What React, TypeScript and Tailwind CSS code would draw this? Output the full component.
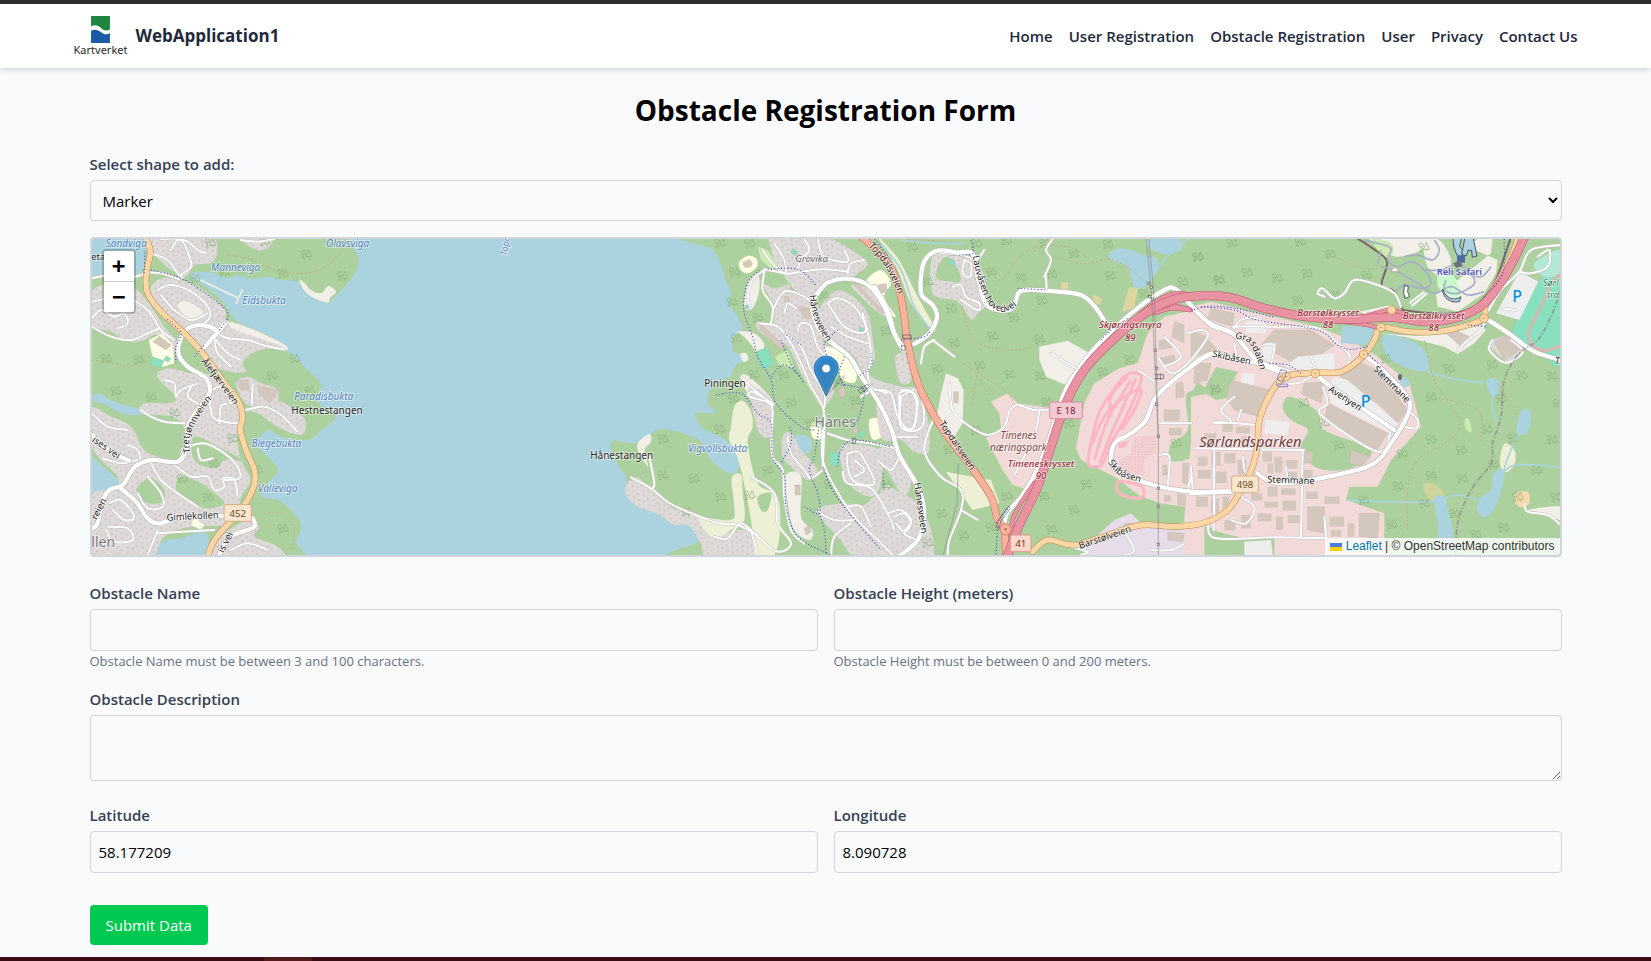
import { useState } from "react";
import type { ReactNode } from "react";

/* ------------------------------------------------------------------ */
/* Map geometry. Four sheets laid side by side, each with an x origin. */
/* ------------------------------------------------------------------ */

const W = 240; // west shore
const H = 1710; // Hånes
const T = 2640; // Timenes
const S = 3570; // Sørlandsparken

const WATER = "#aad3df";
const FOREST = "#add19e";
const TOWN = "#dddad9";
const TRADE = "#f2dad9";
const OPEN = "#f2efe9";
const FARM = "#eef0d5";
const SCHOOL = "#ffffe5";
const HALL = "#d4c8be";
const PITCH = "#88e0be";
const LOT = "#eeeeee";
const WORKS = "#e6dcea";

type Shape = [number, string, string, boolean?];

function parse(points: string): number[][] {
  return points.split(" ").map((p) => p.split(",").map(Number));
}

/* Catmull-Rom curve through the points */
function curve(points: string, closed = false): string {
  const p = parse(points);
  const n = p.length;
  const at = (i: number) => (closed ? p[(i + n) % n] : p[Math.max(0, Math.min(n - 1, i))]);
  let d = `M${p[0][0]} ${p[0][1]}`;
  const last = closed ? n : n - 1;
  for (let i = 0; i < last; i++) {
    const [a, b, c, e] = [at(i - 1), at(i), at(i + 1), at(i + 2)];
    d += `C${b[0] + (c[0] - a[0]) / 6} ${b[1] + (c[1] - a[1]) / 6} ${c[0] - (e[0] - b[0]) / 6} ${c[1] - (e[1] - b[1]) / 6} ${c[0]} ${c[1]}`;
  }
  return closed ? d + "Z" : d;
}

function straight(points: string): string {
  return "M" + points.split(" ").join("L") + "Z";
}

const land: Shape[] = [
  [W, FOREST, "33,142 100,138 180,128 195,60 205,27 205,0 770,0 800,27 832,85 822,130 795,165 762,200 740,218 700,205 665,180 650,155 600,150 560,140 510,146 470,135 440,145 400,130 350,125 325,138 380,175 425,215 470,275 560,315 610,355 680,420 720,465 708,515 765,555 722,600 680,630 600,620 560,600 525,640 560,680 592,720 560,760 542,800 590,810 635,845 662,890 645,935 665,965 640,1000 0,1000 0,142"],
  [H, FOREST, "425,0 428,60 445,90 465,150 480,190 475,220 515,290 485,325 490,365 525,385 490,410 480,440 450,450 415,485 412,520 432,548 375,550 390,590 430,612 475,640 505,690 495,728 465,725 420,690 390,635 330,608 270,598 225,620 190,640 120,635 135,695 165,740 168,790 200,830 255,850 310,885 350,885 385,930 405,1000 2000,1000 3100,1000 3100,0 2000,0"],
];

const areas: Shape[] = [
  // west shore: water inlets
  [W, WATER, "33,497 60,492 100,515 175,538 178,555 120,550 70,522 33,512"],
  [W, WATER, "25,685 60,705 105,745 115,775 70,790 30,805"],
  [W, WATER, "245,935 300,925 365,905 385,940 380,990 200,990"],
  [W, OPEN, "655,150 672,160 690,180 720,190 742,168 765,185 748,202 740,218 700,205 670,182"],
  [W, OPEN, "440,275 520,300 612,345 610,362 545,345 470,310"],
  // west shore: housing
  [W, TOWN, "215,20 385,20 408,70 385,100 345,105 312,140 280,125 240,95 215,60"],
  [W, TOWN, "480,20 570,20 560,55 520,58"],
  [W, TOWN, "30,200 60,165 150,170 200,215 250,290 292,340 285,372 230,315 190,330 140,335 90,305 30,285"],
  [W, TOWN, "208,180 230,150 270,145 350,170 430,235 445,290 600,348 545,358 510,372 485,400 495,425 450,425 390,405 350,365 300,300 230,230"],
  [W, TOWN, "228,440 260,415 330,430 400,440 465,520 480,570 468,625 480,690 508,750 480,800 470,840 420,850 350,840 320,760 290,715 310,600 270,560 180,550 190,520 260,520 285,500"],
  [W, TOWN, "465,460 500,440 540,460 590,480 580,525 500,525"],
  [W, TOWN, "490,535 560,525 600,515 640,540 672,570 668,610 640,612 590,590 530,550"],
  [W, TOWN, "30,535 90,560 150,590 190,660 250,690 330,750 360,840 440,850 440,885 330,890 250,920 200,990 30,990 30,800 100,780 110,740 60,690 30,640"],
  [W, TOWN, "420,920 500,870 535,890 520,920 590,950 600,990 400,990"],
  [W, FOREST, "170,770 210,745 250,780 245,815 200,820 172,795"],
  [W, FOREST, "300,740 360,760 400,790 430,820 380,835 310,810 285,775"],
  [W, FOREST, "230,590 300,610 310,650 240,655 190,640"],
  [W, FOREST, "340,620 430,660 480,690 430,690 400,715 340,690"],
  [W, SCHOOL, "203,330 245,310 275,345 280,400 245,410 215,380", true],
  [W, HALL, "215,335 235,318 270,345 255,360", true],
  [W, PITCH, "215,380 250,392 238,415 207,402", true],
  [W, PITCH, "255,377 270,385 262,397 248,390", true],
  [W, HALL, "465,450 500,450 505,480 480,480", true],
  [W, HALL, "530,468 592,480 565,520 535,490", true],
  [W, SCHOOL, "340,865 370,885 360,900 330,885", true],
  [W, OPEN, "290,225 320,215 365,245 350,270 310,255"],
  // Hånes
  [H, TOWN, "590,0 640,20 760,20 840,60 890,100 860,130 830,150 750,170 720,215 680,190 640,140 610,90"],
  [H, SCHOOL, "505,95 530,78 555,85 558,110 530,130 508,118"],
  [H, HALL, "515,98 535,88 545,100 538,112 520,112", true],
  [H, SCHOOL, "885,155 930,120 960,160 940,200 975,260 940,240 910,200"],
  [H, "#cdebb0", "560,50 590,60 625,110 610,125 570,90", true],
  [H, OPEN, "530,160 560,130 565,180 545,235 520,230"],
  [H, TOWN, "575,160 610,175 655,165 640,200 610,220 590,190"],
  [H, TOWN, "620,205 680,190 735,215 750,300 760,340 800,360 770,400 790,480 755,530 725,490 690,430 650,350 600,330 560,300 560,275 605,280"],
  [H, TOWN, "745,240 790,185 840,195 890,250 905,330 910,390 880,430 850,380 800,340 760,310"],
  [H, TOWN, "840,165 880,170 930,210 945,260 900,230 860,190"],
  [H, TOWN, "880,430 920,450 990,470 1045,480 1060,560 1040,640 990,620 950,560 900,490"],
  [H, TOWN, "975,375 1000,365 1010,430 985,430", true],
  [H, OPEN, "500,305 550,310 580,345 560,380 545,350 520,320"],
  [H, OPEN, "508,372 525,370 532,388 518,396"],
  [H, OPEN, "508,440 535,440 600,505 600,530 570,540 530,490"],
  [H, TOWN, "535,470 600,510 602,615 565,610 545,540"],
  [H, TOWN, "635,620 660,610 700,670 740,720 710,750 660,710 635,680"],
  [H, OPEN, "645,735 690,740 690,860 725,900 715,930 670,900 650,820"],
  [H, TOWN, "810,650 880,645 930,670 930,760 900,800 840,770 815,720"],
  [H, TOWN, "740,840 830,820 870,830 930,790 950,850 960,900 1040,850 1080,900 1070,1000 880,1000 800,920"],
  [H, TOWN, "920,660 980,660 1020,740 1000,800 960,740"],
  [H, TOWN, "168,760 200,742 240,780 300,830 390,860 440,910 530,900 560,950 580,1000 420,1000 385,930 350,885 310,885 255,850 200,830 165,795"],
  [H, OPEN, "200,640 235,612 240,635 220,660 232,710 205,670"],
  [H, FARM, "490,530 515,512 540,545 545,590 530,640 560,760 620,800 625,920 600,990 555,990 540,870 505,700 475,630 480,590"],
  [H, FARM, "482,745 510,735 515,790 520,870 480,900 430,925 385,865 480,870 490,830"],
  [H, FOREST, "560,800 600,790 590,840 570,840"],
  [H, SCHOOL, "765,350 820,370 855,420 850,458 810,445 800,395 765,375"],
  [H, SCHOOL, "720,585 745,575 750,625 725,622"],
  [H, SCHOOL, "895,570 935,570 945,610 905,628"],
  [H, PITCH, "552,365 590,352 610,405 575,420", true],
  [H, "#cdebb0", "612,380 650,360 670,415 625,405", true],
  [H, PITCH, "775,665 805,668 803,708 778,706", true],
  [H, PITCH, "865,290 878,295 876,315 864,310", true],
  [H, PITCH, "868,600 885,605 878,625 864,620", true],
  [H, PITCH, "522,225 537,225 537,236 522,236", true],
  [H, PITCH, "663,55 680,65 675,78 660,68", true],
  [H, HALL, "640,200 655,200 655,215 640,215", true],
  [H, HALL, "680,230 715,235 735,265 700,265", true],
  [H, HALL, "800,480 820,470 825,495 810,505", true],
  [H, HALL, "845,595 862,595 862,610 845,606", true],
  [H, HALL, "845,160 855,160 940,245 930,250", true],
  [H, HALL, "920,165 945,160 950,185 930,190", true],
  [H, HALL, "672,765 688,765 688,795 672,795", true],
  [H, HALL, "700,895 715,885 722,905 705,915", true],
  [H, HALL, "570,285 640,345 630,360 565,300", true],
  [H, WATER, "672,620 700,615 722,635 715,668 695,665"],
  // Timenes
  [T, FARM, "-10,20 30,60 60,100 110,200 160,290 150,300 90,220 50,120"],
  [T, TOWN, "155,75 200,75 290,100 320,210 290,250 270,268 230,215 155,190"],
  [T, FOREST, "185,85 215,90 240,150 210,155 165,140"],
  [T, PITCH, "205,88 222,92 218,108 203,104", true],
  [T, TOWN, "-10,470 60,490 130,530 145,660 100,665 60,630 0,620"],
  [T, TOWN, "0,780 60,790 115,830 130,920 60,990 0,990"],
  [T, TOWN, "45,375 75,375 90,450 60,460 45,410"],
  [T, OPEN, "195,430 230,445 248,480 245,580 220,620 165,570 180,490", true],
  [T, OPEN, "475,350 560,332 635,375 555,465 495,440 475,390", true],
  [T, TRADE, "315,625 360,595 355,550 330,515 380,490 410,520 510,535 520,600 490,700 445,780 395,765 365,720", true],
  [T, FARM, "195,725 245,735 330,750 355,820 275,840 240,790", true],
  [T, TRADE, "640,460 715,415 770,400 800,310 850,260 960,235 1050,235 1100,300 1100,420 950,450 930,500 920,600 870,690 1060,680 1100,860 840,820 780,800 700,740 600,690 585,655 610,520", true],
  [T, FOREST, "950,475 1040,420 1060,420 1060,510 980,510 935,560 940,660 910,690 868,690 870,640 920,600 915,500"],
  [T, WORKS, "700,870 750,850 780,880 880,900 960,890 970,990 640,990 600,960", true],
  [T, TRADE, "980,880 1060,850 1100,1000 1010,1000 990,930", true],
  [T, WATER, "682,75 720,55 790,75 830,90 825,130 790,170 760,172 740,110 700,95"],
  [T, WATER, "800,30 890,25 900,60 850,72 805,55"],
  [T, "#dcd6a0", "745,170 770,175 760,235 722,245", true],
  [T, "#dcd6a0", "540,155 562,158 560,185 540,182", true],
  [T, "#dcd6a0", "635,195 665,205 655,225 640,220", true],
  [T, HALL, "880,275 930,290 910,340 872,320", true],
  [T, HALL, "920,320 990,335 970,375 912,365", true],
  [T, HALL, "950,240 1020,240 1015,260 960,262", true],
  [T, HALL, "835,330 870,330 880,350 835,360", true],
  [T, HALL, "835,385 880,375 885,400 840,400", true],
  [T, HALL, "885,460 905,455 910,500 885,505", true],
  [T, HALL, "850,540 895,540 895,570 850,572", true],
  [T, HALL, "865,595 902,595 902,615 865,615", true],
  [T, HALL, "218,485 232,485 232,518 218,518", true],
  [T, HALL, "905,700 925,700 925,760 905,760", true],
  [T, HALL, "945,690 985,690 985,740 945,740", true],
  [T, HALL, "890,790 925,800 920,830 890,825", true],
  [T, HALL, "730,880 760,880 760,900 730,900", true],
  [T, HALL, "860,905 910,910 905,935 860,930", true],
  [T, HALL, "1010,890 1060,880 1060,930 1010,930", true],
  [T, HALL, "845,705 858,705 858,735 845,735", true],
  [T, HALL, "850,795 870,798 868,815 850,812", true],
  // Sørlandsparken
  [S, TRADE, "-20,235 60,215 200,250 380,290 480,330 560,380 655,460 690,590 600,690 560,770 475,770 465,810 580,850 580,990 -20,990 -20,860 0,640 0,500 60,490 -20,420", true],
  [S, FOREST, "35,485 75,410 140,425 105,505 75,510", true],
  [S, FOREST, "275,530 300,500 380,545 400,600 540,660 480,715 380,715 330,655 350,600 300,570"],
  [S, FOREST, "40,890 250,925 250,1000 40,1000", true],
  [S, TRADE, "60,900 150,880 330,880 560,900 580,1000 260,1000 250,925 160,925", true],
  [S, OPEN, "505,245 600,225 640,262 560,272", true],
  [S, OPEN, "560,310 680,318 860,280 885,300 850,340 800,372 760,350 640,320", true],
  [S, OPEN, "900,70 905,27 860,27 830,50 920,90 915,130 880,190 800,245 740,230 735,190 800,150", true],
  [S, OPEN, "540,20 700,20 690,60 620,80 580,60"],
  [S, "#c8facc", "745,130 790,140 805,200 760,190 740,165"],
  [S, "#cdebb0", "545,27 600,40 605,70 575,80"],
  [S, OPEN, "700,35 745,30 780,90 760,140 710,110"],
  [S, PITCH, "1060,130 1110,110 1110,400 1040,360 985,350 960,310"],
  [S, "#b3e8d6", "1030,100 1110,60 1110,130 1060,140"],
  [S, LOT, "985,125 1042,155 985,270 915,250", true],
  [S, TOWN, "905,330 960,310 995,360 950,400 895,350", true],
  [S, HALL, "910,335 955,312 988,355 940,392", true],
  [S, HALL, "250,300 360,300 430,345 395,370 300,395 210,345", true],
  [S, HALL, "60,235 130,250 125,290 50,265", true],
  [S, HALL, "0,300 45,320 75,355 0,385", true],
  [S, HALL, "10,400 60,400 50,450 10,460", true],
  [S, LOT, "165,275 220,270 225,310 165,310", true],
  [S, LOT, "215,345 255,340 240,400 215,385", true],
  [S, LOT, "155,430 195,430 180,480 145,470", true],
  [S, LOT, "320,380 430,370 430,420 350,420 280,410", true],
  [S, HALL, "120,450 200,470 240,480 205,560 130,540 105,500", true],
  [S, HALL, "340,460 400,455 390,520 330,490", true],
  [S, HALL, "440,430 500,395 560,420 650,540 620,580 560,520 470,470", true],
  [S, LOT, "430,440 470,450 620,580 600,610 420,520 410,470", true],
  [S, HALL, "410,520 590,610 555,665 400,570", true],
  [S, HALL, "480,660 540,680 510,710 475,700", true],
  [S, LOT, "225,570 295,575 290,615 220,610", true],
  [S, LOT, "160,935 240,930 245,975 160,975", true],
  [S, HALL, "505,850 565,850 560,925 505,920", true],
  [S, HALL, "350,830 400,830 400,910 350,900", true],
  [S, HALL, "765,310 795,300 835,320 810,350", true],
  [S, WATER, "452,288 555,290 530,345 450,340", true],
  [S, WATER, "575,320 620,318 690,350 715,400 700,425 640,410 590,380"],
  [S, WATER, "625,450 645,445 658,462 640,472"],
  [S, WATER, "885,455 905,445 925,455 920,495 900,495"],
  [S, WATER, "990,545 1015,540 1020,570 1005,612 980,610 978,590"],
  [S, FARM, "928,680 942,640 970,660 972,700 950,725 930,715"],
  [S, WATER, "905,735 930,715 940,740 925,800 900,850 875,860 858,835 870,800 900,780"],
  [S, "#cfd49a", "695,765 735,765 760,800 720,810"],
  [S, WATER, "730,805 760,800 770,840 785,900 790,960 745,960 740,880"],
  [S, "#fbd9a8", "975,790 1010,785 1015,820 990,832 972,815"],
  [S, "#cdebb0", "822,568 835,570 842,605 825,598"],
  [S, OPEN, "1010,840 1110,830 1110,870 1060,850"],
];

/* rows of sheds in the trade park: x, y, width, height */
const sheds: [number, number, number, number][] = [
  [20, 680, 30, 28], [62, 665, 26, 42], [100, 670, 34, 30], [140, 690, 26, 44], [215, 665, 28, 30],
  [250, 680, 24, 48], [20, 720, 40, 26], [75, 725, 32, 34], [230, 700, 16, 30], [285, 690, 34, 26],
  [290, 725, 28, 20], [15, 800, 36, 30], [60, 805, 24, 44], [95, 800, 20, 34], [180, 790, 34, 22],
  [230, 770, 30, 30], [270, 775, 44, 20], [220, 815, 40, 18], [275, 812, 40, 30], [100, 870, 34, 32],
  [150, 855, 30, 40], [200, 850, 42, 24], [255, 860, 22, 40], [290, 855, 36, 24], [95, 580, 30, 26],
  [135, 590, 42, 20], [40, 610, 36, 20], [345, 785, 36, 22], [400, 800, 46, 22], [150, 620, 20, 26],
  [415, 860, 44, 30], [420, 900, 30, 20], [470, 880, 20, 40], [330, 665, 34, 36], [335, 720, 30, 24],
];

type RoadKind = "lane" | "street" | "orange" | "red" | "ramp" | "motor";

const roads: [number, RoadKind, string][] = [
  // west shore
  [W, "lane", "33,145 90,135 160,140 200,128 240,130 295,148"],
  [W, "lane", "215,72 260,90 290,130 305,145"],
  [W, "lane", "240,27 300,30 325,80 330,110 300,135"],
  [W, "lane", "270,60 290,30 320,35 350,60 375,70"],
  [W, "lane", "480,30 530,35 580,27"],
  [W, "lane", "33,215 90,205 140,205 200,240 240,300 280,330"],
  [W, "lane", "33,265 60,240 100,260 130,250 140,280 110,295"],
  [W, "lane", "33,290 90,320 150,330 200,310 235,295"],
  [W, "lane", "230,180 270,165 330,185 380,230 385,265 350,290"],
  [W, "lane", "240,195 280,240 330,270 380,250"],
  [W, "lane", "410,310 440,325 500,330 545,345 605,358"],
  [W, "lane", "400,325 440,370 480,390"],
  [W, "lane", "400,330 410,370 450,410"],
  [W, "lane", "180,540 210,560 250,575 310,580"],
  [W, "lane", "380,490 420,470 450,520"],
  [W, "lane", "385,500 395,560 430,575 470,580"],
  [W, "lane", "415,580 420,530 440,520"],
  [W, "lane", "320,650 370,640 430,670 470,710 475,745 430,750"],
  [W, "lane", "350,655 360,690 395,685"],
  [W, "lane", "280,705 330,740 380,740 400,780 430,770 425,745 460,750 470,800"],
  [W, "lane", "210,700 240,750 290,790 350,830"],
  [W, "lane", "250,450 280,460 285,500 300,480 350,460"],
  [W, "lane", "330,470 320,500 350,520"],
  [W, "lane", "33,550 80,590 140,600"],
  [W, "lane", "65,685 120,700 170,690"],
  [W, "lane", "140,645 170,660 180,695"],
  [W, "lane", "85,820 120,810 160,860 130,870 95,840"],
  [W, "lane", "80,890 140,895 155,930 100,935 75,900"],
  [W, "lane", "200,740 240,790 245,830 200,835 170,790"],
  [W, "lane", "230,900 200,975"],
  [W, "lane", "230,910 300,905 400,900"],
  [W, "lane", "450,960 500,940 560,960"],
  [W, "lane", "495,540 550,530 600,555 650,605"],
  [W, "lane", "515,460 512,525"],
  [W, "street", "412,305 380,288 330,290 302,320 292,370 320,410 375,445 385,490 345,545 320,590 318,650 290,695 210,690 160,712 125,765 85,780 62,820 50,880 33,895"],
  [W, "street", "365,358 435,278"],
  [W, "street", "33,615 90,665 145,692"],
  [W, "street", "120,775 165,815 200,865 235,880 300,862 430,858"],
  [W, "street", "515,865 520,890 470,910 440,925 415,975"],
  [W, "orange", "190,15 208,65 196,130 200,190 240,245 310,310 365,370 420,445 470,510 485,560 478,600 495,660 520,720 518,770 480,840 420,905 390,950 380,990"],
  // Hånes
  [H, "lane", "575,60 600,95 640,130 690,125 760,118 830,125"],
  [H, "lane", "610,40 640,90 645,130"],
  [H, "lane", "700,27 715,60 690,90 680,120"],
  [H, "lane", "740,27 760,80 830,95 820,60"],
  [H, "lane", "830,130 840,100 880,90"],
  [H, "lane", "580,120 545,150 530,200 540,235"],
  [H, "lane", "580,118 640,130"],
  [H, "lane", "580,125 575,180 605,230 600,280"],
  [H, "lane", "605,240 640,185 690,195 720,215"],
  [H, "lane", "565,280 620,290 660,340 690,400 720,470 755,530 760,590 755,710"],
  [H, "lane", "640,310 690,350 720,420 760,490 760,530"],
  [H, "lane", "680,300 690,280 720,290 740,350 780,400"],
  [H, "lane", "640,250 650,220 675,235"],
  [H, "lane", "770,220 800,205 850,230 885,290 870,310 820,290 790,250 770,220"],
  [H, "lane", "780,290 830,320 890,340"],
  [H, "lane", "875,250 895,330 900,400 880,430"],
  [H, "lane", "510,440 540,470 600,520 605,520 590,510 545,485 535,500 600,525 602,600 605,680 635,720 640,800 660,900 700,940"],
  [H, "lane", "650,620 660,670 700,720 720,745 755,720"],
  [H, "lane", "985,490 1010,480 1035,510 1030,590 990,590 985,530 985,490"],
  [H, "lane", "890,430 900,470 950,490"],
  [H, "lane", "970,620 1040,620"],
  [H, "lane", "830,670 860,665 880,690 910,760 850,755 830,710 830,670"],
  [H, "lane", "850,690 880,720 850,740"],
  [H, "lane", "815,725 830,760 900,775 950,850 970,900"],
  [H, "lane", "830,830 870,830 900,890"],
  [H, "lane", "970,860 1000,850 1020,880 1000,905 975,880"],
  [H, "lane", "740,845 790,870 850,870"],
  [H, "lane", "780,975 790,920 840,880"],
  [H, "lane", "540,740 610,790 620,880 660,940 620,965 560,920 510,880 470,925 430,920"],
  [H, "lane", "540,900 560,975"],
  [H, "lane", "920,690 960,720 985,680"],
  [H, "lane", "180,742 240,775 300,822 400,865 445,880 500,885 560,915"],
  [H, "lane", "235,680 250,760 243,775"],
  [H, "lane", "755,600 755,690 790,770 850,860 930,940 965,975"],
  [H, "lane", "770,610 830,630 900,640 975,655"],
  [H, "street", "740,190 770,158 830,146 895,168 940,230 970,310 1003,362"],
  [H, "street", "740,190 722,225 740,290 775,332 835,380 875,445 925,520 962,600 985,675 1040,770 1060,850 1040,930 975,985"],
  // Timenes
  [T, "lane", "490,140 510,90 495,60 515,27"],
  [T, "lane", "495,140 497,180"],
  [T, "lane", "155,330 220,380"],
  [T, "lane", "120,400 130,350 160,330"],
  [T, "lane", "310,60 285,90 245,75 180,70"],
  [T, "lane", "250,90 270,100 268,140 245,130 250,90"],
  [T, "lane", "215,170 240,165 255,200 295,220 290,240 240,210"],
  [T, "lane", "160,560 130,660 180,740 240,780 240,840 205,930 200,975"],
  [T, "lane", "205,460 215,540 260,585 320,615 370,590 385,545 410,525 460,540 520,540"],
  [T, "lane", "510,370 600,425"],
  [T, "lane", "475,545 465,600"],
  [T, "lane", "400,735 440,660"],
  [T, "lane", "240,840 290,870"],
  [T, "lane", "770,420 820,455 830,490"],
  [T, "lane", "830,380 870,430 920,400 980,320 960,300 920,310"],
  [T, "lane", "850,410 900,380 850,320"],
  [T, "lane", "830,580 930,580"],
  [T, "lane", "835,675 865,680 860,770"],
  [T, "lane", "930,710 935,780"],
  [T, "lane", "1000,580 1050,575 1020,540 1060,500"],
  [T, "lane", "1000,790 1000,850"],
  [T, "lane", "720,890 760,960 730,975"],
  [T, "lane", "570,950 620,965 600,975"],
  [T, "lane", "810,960 870,960 910,940"],
  [T, "lane", "-60,500 -20,480 30,490 50,560 90,600 110,530 100,490 60,480"],
  [T, "lane", "60,500 110,480 130,560 110,600 60,590 60,500"],
  [T, "lane", "20,850 60,840 90,870 70,910 110,930"],
  [T, "street", "-20,170 20,240 40,310 65,358"],
  [T, "street", "100,342 145,310 168,260 155,225 122,195 120,140 132,90 170,62 230,68 275,72 292,150 320,228 390,238 412,190 440,180 530,185 600,195 640,228 672,275"],
  [T, "street", "370,895 378,850 425,795 470,715 500,640 545,500 580,435 650,345 750,250 850,180 885,178 920,215 980,275 1050,308"],
  [T, "street", "1010,365 950,395 830,495 795,570 750,610 705,635 690,675 700,715 770,750 860,775 960,787 1060,785"],
  // Sørlandsparken
  [S, "lane", "125,290 240,290 380,295 440,340 475,375 470,405"],
  [S, "lane", "120,310 150,270 200,265 225,290"],
  [S, "lane", "215,345 250,345 240,400"],
  [S, "lane", "270,460 320,460 360,440"],
  [S, "lane", "360,380 375,420"],
  [S, "lane", "395,470 410,520 390,555 560,665 600,600"],
  [S, "lane", "640,590 675,595 680,570 655,545"],
  [S, "lane", "70,575 200,585"],
  [S, "lane", "70,660 68,900"],
  [S, "lane", "10,655 340,660"],
  [S, "lane", "0,740 0,790 110,790"],
  [S, "lane", "285,710 290,760"],
  [S, "lane", "335,660 330,925"],
  [S, "lane", "155,680 165,730 190,680"],
  [S, "lane", "400,860 405,920"],
  [S, "lane", "50,880 75,925 250,922 410,925"],
  [S, "lane", "130,790 190,830 165,880 120,870"],
  [S, "lane", "140,400 130,340"],
  [S, "lane", "150,540 140,570"],
  [S, "lane", "400,200 380,190 395,175 430,205 460,190 490,150 560,165 610,190 630,230"],
  [S, "lane", "905,330 895,360 945,398 995,365 960,330"],
  [S, "lane", "985,125 1020,130 1070,110 1075,60 1040,80"],
  [S, "lane", "890,245 930,180 985,125 1020,60 1110,45"],
  [S, "lane", "885,265 870,300 830,330 800,360"],
  [S, "lane", "930,235 975,240"],
  [S, "lane", "1000,820 1010,845 1070,855 1110,885"],
  [S, "street", "-4,222 60,285 125,310 200,395 265,425"],
  [S, "street", "-4,412 60,372 140,388 230,405 290,425"],
  [S, "street", "370,430 420,470 500,525 610,600"],
  [S, "street", "520,375 575,420 640,490 655,540 600,640 540,705 400,742 270,760 215,742 200,730"],
  [S, "street", "0,790 60,785 120,785 150,795"],
  [S, "street", "895,272 960,315 1030,365 1110,390"],
  [S, "orange", "-475,965 -430,930 -350,945 -250,915 -150,885 -50,890 40,878 110,840 150,780 185,710 200,640 205,570 245,480 290,438 370,428 450,425 515,380 550,330 570,292 650,305 740,305 820,288 878,265 885,215 930,140 965,70 985,15"],
  // trunk roads
  [H, "red", "860,10 910,55 960,115 985,180 1000,260 1010,340 1045,470 1110,590 1200,710 1260,800 1280,870 1300,900 1305,990"],
  [T, "ramp", "770,258 830,210 885,190 930,195"],
  [T, "ramp", "820,250 870,235 930,240 870,225"],
  [S, "ramp", "380,262 500,262 600,240 660,262"],
  [S, "ramp", "420,272 500,280 560,292"],
  [T, "ramp", "392,930 395,870 425,810 460,760"],
  [T, "motor", "375,990 415,885 470,770 510,650 555,520 610,420 700,325 800,245 880,208 960,197 1050,203 1140,232 1260,258 1400,268 1530,262 1630,275 1730,262 1810,220 1870,140 1910,65 1935,10"],
];

const roadStyle = {
  lane: { w: 6, fill: "#ffffff", edge: "#c3bfbd" },
  street: { w: 13, fill: "#ffffff", edge: "#b5b1af" },
  orange: { w: 16, fill: "#fcd6a4", edge: "#b88a52" },
  red: { w: 19, fill: "#f9b29c", edge: "#c76a55" },
  ramp: { w: 10, fill: "#e892a2", edge: "#c2506f" },
  motor: { w: 24, fill: "#e892a2", edge: "#c2506f" },
};
const roadOrder: RoadKind[] = ["lane", "street", "orange", "red", "ramp", "motor"];

const cyclePaths: [number, string][] = [
  [W, "190,130 192,60"],
  [W, "210,120 300,145 380,195 435,240 438,270 410,305"],
  [W, "285,400 285,350 300,310 255,265"],
  [W, "340,380 370,345"],
  [H, "565,120 530,160 518,240 545,320 560,380 600,450 615,520 690,590 730,600"],
  [H, "590,118 680,118 735,165"],
  [H, "600,440 640,405 690,440"],
  [H, "435,495 510,490 560,550 600,580 605,680 640,740 645,830 680,920 780,975"],
  [H, "630,330 660,400 700,460"],
  [H, "690,345 640,310"],
  [H, "800,300 760,340 770,380"],
  [H, "800,460 850,470 880,480 865,560 840,590"],
  [H, "658,590 660,640 630,700"],
  [H, "755,710 790,790 860,880 930,960"],
  [H, "745,580 730,680 715,720 740,790 745,850 700,830"],
  [H, "800,710 810,660 850,630 960,650"],
  [H, "740,840 760,900 765,975"],
  [H, "820,380 805,430 820,470"],
  [H, "900,370 900,410 860,440"],
  [H, "935,730 940,780"],
  [H, "910,27 960,90"],
  [T, "350,890 345,975"],
  [T, "60,330 130,320 150,300"],
  [T, "270,30 275,70 235,75"],
  [T, "410,175 500,180"],
  [T, "660,330 690,300 740,265"],
  [T, "385,830 345,880"],
  [T, "930,240 1000,228 1090,240 1180,262"],
  [S, "30,230 130,240 200,270 380,300 440,345 480,358 530,350"],
  [S, "235,400 290,405 330,430"],
  [S, "560,400 530,370"],
  [S, "940,27 935,130 890,190"],
  [S, "830,285 890,290"],
];

const trails: [number, string][] = [
  [W, "440,75 520,90 600,125 700,125 770,80 790,27"],
  [W, "33,390 100,400 150,410 200,370"],
  [W, "550,850 600,850 640,900 630,960"],
  [T, "80,27 200,35"],
  [T, "320,100 360,150 440,60 560,50 640,100"],
  [T, "240,215 280,330 380,360 460,350"],
  [T, "220,380 290,430 370,480 400,520"],
  [T, "290,440 330,500"],
  [T, "460,60 600,100 700,90 800,160"],
  [T, "300,400 280,470 275,530"],
  [H, "820,520 870,540 850,480"],
  [S, "430,80 500,110 560,120"],
  [S, "700,330 730,450 800,560 790,620 680,690 650,780 650,900"],
  [S, "730,500 860,540 870,640"],
  [S, "890,420 960,520 980,560"],
];

const streams: [number, string][] = [
  [W, "33,497 80,520 160,545"],
  [T, "0,40 60,120 100,230 150,300"],
  [T, "60,30 160,40 250,40"],
  [T, "930,20 860,80 800,160"],
  [S, "710,425 780,445 880,460"],
  [S, "905,495 905,540 918,575"],
  [S, "985,610 960,660 940,720 970,705 1040,705 1110,712"],
  [S, "465,810 600,815 720,815 800,795 860,810"],
];

const trees: [number, string][] = [
  [W, "387,38 427,125 342,145 550,33 675,72 605,130 783,137 75,385 173,388 103,482 210,500 280,548 455,625 398,700 303,745 380,802 573,435 685,482 640,385 528,718 605,895"],
  [H, "447,38 490,125 482,215 560,262 548,433 637,435 660,517 487,505 445,597 275,627 275,735 368,745 447,800 535,795 590,720 853,512 717,578 775,762 945,765 495,325 757,195 943,302 535,40 345,845"],
  [T, "93,50 285,40 375,30 490,38 578,70 680,42 687,137 905,155 1015,148 950,80 140,155 330,125 420,142 512,132 482,210 210,235 398,262 578,295 335,318 475,327 220,338 167,415 297,405 387,433 477,437 745,387 665,425 497,515 563,580 283,600 203,658 377,797 488,798 578,838 615,762 182,850 247,915 330,892 510,897 138,938 788,190 1003,477 885,638"],
  [S, "20,80 123,38 168,127 83,150 258,143 347,130 417,72 327,35 525,135 320,210 432,195 72,477 337,517 398,578 443,645 633,670 583,385 773,415 903,403 992,435 1083,437 720,500 930,505 888,597 965,625 1083,628 720,628 810,660 720,735 813,745 908,702 1035,720 620,767 517,810 790,850 602,882 853,912 937,892 700,820 698,50 1095,800 1100,520 980,800"],
];

/* ------------------------------ labels ----------------------------- */

type LabelKind = "sea" | "place" | "exit" | "park" | "bay" | "road";

const labels: [number, number, number, string, LabelKind, number?][] = [
  [W, 136, 50, "Sandviga", "sea"],
  [W, 800, 50, "Olavsviga", "sea"],
  [W, 464, 122, "Manneviga", "sea"],
  [W, 549, 221, "Eidsbukta", "sea"],
  [W, 728, 509, "Paradisbukta", "sea"],
  [W, 586, 651, "Blegebukta", "sea"],
  [W, 590, 786, "Valleviga", "sea"],
  [H, 440, 667, "Vigvollsbukta", "sea"],
  [W, 738, 552, "Hestnestangen", "place"],
  [H, 462, 470, "Piningen", "place"],
  [H, 152, 688, "Hånestangen", "place"],
  [H, 722, 96, "Grovika", "bay"],
  [T, 413, 627, "Timenes", "park"],
  [T, 412, 663, "næringspark", "park"],
  [T, 480, 710, "Timeneskrysset", "exit"],
  [T, 480, 746, "90", "exit"],
  [T, 748, 295, "Skjøringsmyra", "exit"],
  [T, 748, 332, "89", "exit"],
  [S, 411, 257, "Barstølkrysset", "exit"],
  [S, 411, 293, "88", "exit"],
  [S, 728, 268, "Barstølkrysset", "exit"],
  [S, 728, 304, "88", "exit"],
  [T, 672, 931, "Barstølveien", "road", -19],
  [T, 228, 655, "Topdalsveien", "road", 56],
  [T, 118, 842, "Hånesveien", "road", 82],
  [S, 122, 392, "Skibåsen", "road", 12],
  [S, 300, 760, "Stemmane", "road", 2],
  [S, 462, 514, "Avenyen", "road", 33],
  [S, 602, 472, "Stemmane", "road", 45],
  [W, 75, 662, "ises vei", "road", 35],
  [W, 55, 845, "reien", "road", -62],
  [W, 435, 945, "is vei", "road", -62],
  [W, 335, 868, "Gimlekollen", "road", -3],
];

const curvedLabels: [string, number, string, string][] = [
  ["alef", W, "360,395 415,465 462,530", "Ålefjærveien"],
  ["tretj", W, "328,668 328,610 375,528 400,500", "Tretjønnveien"],
  ["hanes", H, "716,195 722,240 745,300 790,365", "Hånesveien"],
  ["topd", H, "892,48 940,105 975,175 995,240", "Topdalsveien"],
  ["lauv", T, "275,78 290,145 320,218 360,245 400,232 440,200", "Lauvåsen hovedvei"],
  ["skib", T, "680,698 715,735 775,756 820,765", "Skibåsen"],
  ["gras", S, "132,325 175,340 200,395 212,440", "Grasdalen"],
];

const labelClass = {
  sea: "fill-[#4f7fbd] text-[30px] italic",
  place: "fill-[#222222] text-[30px]",
  exit: "fill-[#9b2c3a] text-[29px] italic font-medium",
  park: "fill-[#7d4a4a] text-[30px] italic",
  bay: "fill-[#666666] text-[29px] italic",
  road: "fill-[#222222] text-[28px]",
};

function Halo({ children }: { children: ReactNode }) {
  return (
    <g stroke="#ffffff" strokeWidth={5} strokeOpacity={0.65} strokeLinejoin="round" paintOrder="stroke">
      {children}
    </g>
  );
}

function Shield({ x, y, w, text, fill, edge, ink }: { x: number; y: number; w: number; text: string; fill: string; edge: string; ink: string }) {
  return (
    <g>
      <rect x={x - w / 2} y={y - 25} width={w} height={50} rx={5} fill={fill} stroke={edge} strokeWidth={3} />
      <text x={x} y={y + 11} textAnchor="middle" fill={ink} className="text-[29px]">
        {text}
      </text>
    </g>
  );
}

function MapDrawing() {
  return (
    <svg
      viewBox="273 27 4404 948"
      preserveAspectRatio="xMidYMid slice"
      className="block h-full w-full font-['Noto_Sans',sans-serif]"
      role="img"
      aria-label="Map of Hånes and Sørlandsparken"
    >
      <defs>
        <pattern id="houses" width="34" height="31" patternUnits="userSpaceOnUse" patternTransform="rotate(24)">
          <rect x="3" y="4" width="6" height="5" fill="#cec5bf" />
          <rect x="19" y="1" width="5" height="6" fill="#cec5bf" />
          <rect x="10" y="17" width="6" height="5" fill="#cec5bf" />
          <rect x="26" y="20" width="5" height="6" fill="#cec5bf" />
        </pattern>
        <pattern id="dots" width="10" height="10" patternUnits="userSpaceOnUse">
          <circle cx="3" cy="3" r="1.8" fill="#f590a8" />
          <circle cx="8" cy="8" r="1.5" fill="#f590a8" />
        </pattern>
        <linearGradient id="pin" x1="0" y1="0" x2="0" y2="1">
          <stop offset="0" stopColor="#2e85cb" />
          <stop offset="1" stopColor="#3883b7" />
        </linearGradient>
        <linearGradient id="pinEdge" x1="0" y1="0" x2="0" y2="1">
          <stop offset="0" stopColor="#126fc6" />
          <stop offset="1" stopColor="#2e6c97" />
        </linearGradient>
        <g id="wood" fill="none" stroke="#8db47f" strokeWidth="2.2" strokeLinejoin="round">
          <circle cx="-8" cy="-5" r="6.5" />
          <path d="M-8 -2V13M-13 13H-3" />
          <path d="M8 -13L-1 8H17ZM8 8V14" />
        </g>
        {curvedLabels.map(([id, dx, pts]) => (
          <path key={id} id={id} transform={`translate(${dx} 0)`} d={curve(pts)} />
        ))}
      </defs>

      <rect x="0" y="0" width="5000" height="1000" fill={WATER} />
      {land.map(([dx, fill, pts], i) => (
        <path key={i} transform={`translate(${dx} 0)`} d={curve(pts, true)} fill={fill} />
      ))}
      {areas.map(([dx, fill, pts, flat], i) => {
        const d = flat ? straight(pts) : curve(pts, true);
        return (
          <g key={i} transform={`translate(${dx} 0)`}>
            <path d={d} fill={fill} />
            {fill === TOWN && <path d={d} fill="url(#houses)" />}
            {(fill === HALL || fill === PITCH) && <path d={d} fill="none" stroke="#bda999" strokeOpacity={0.5} strokeWidth={1.5} />}
          </g>
        );
      })}
      <g transform={`translate(${S} 0)`} fill={HALL}>
        {sheds.map(([x, y, w, h], i) => (
          <rect key={i} x={x} y={y} width={w} height={h} />
        ))}
      </g>

      <g fill="none" stroke={WATER} strokeWidth={5}>
        {streams.map(([dx, pts], i) => (
          <path key={i} transform={`translate(${dx} 0)`} d={curve(pts)} />
        ))}
      </g>
      <g fill="none" stroke="#cf9d7c" strokeWidth={2} strokeDasharray="6 6">
        {trails.map(([dx, pts], i) => (
          <path key={i} transform={`translate(${dx} 0)`} d={curve(pts)} />
        ))}
      </g>
      {trees.map(([dx, pts]) =>
        parse(pts).map(([x, y]) => <use key={`${dx}-${x}-${y}`} href="#wood" x={dx + x} y={y} />),
      )}

      {/* pier in Manneviga */}
      <path transform={`translate(${W} 0)`} d="M358 150L470 203M485 178L465 222" fill="none" stroke={OPEN} strokeWidth={5} />

      {/* racing circuit */}
      <g transform={`translate(${T} 0)`} fill="none" stroke="#ffb6c4" strokeWidth={9} strokeLinejoin="round">
        <path d={curve("735,435 775,432 778,460 735,560 690,640 665,700 640,710 622,690 650,560 690,490", true)} />
        <path d={curve("690,560 690,500 740,440")} />
        <path d={curve("640,690 680,570 750,450")} />
        <path d={curve("655,700 700,590 765,445")} />
        <path d={curve("635,640 670,560 730,500 780,480 760,540 720,600")} />
        <path d={curve("715,755 780,768 788,795 770,805 725,795 708,780", true)} />
      </g>
      <g transform={`translate(${T} 0)`}>
        <path d="M760 620L825 615L825 665L790 690L790 735L720 730L715 690L750 670Z" fill="url(#dots)" />
        <path d="M712 640L745 630L735 650L712 655Z" fill="#ffb6c4" />
      </g>
      {/* trotting track */}
      <path transform={`translate(${S} 0)`} d={curve("1130,120 1090,150 1050,230 1015,300 1020,340 1060,362 1100,350 1140,330")} fill="none" stroke="#dbb6b0" strokeWidth={9} />

      {/* amusement park */}
      <g transform={`translate(${S} 0)`} fill="none">
        <path d={curve("490,20 545,55 588,95 572,165 610,185 635,240")} stroke="#7b6668" strokeWidth={6} />
        <path d={curve("635,240 720,250 800,248 860,222 910,160 940,80 960,20")} stroke="#7b6668" strokeWidth={6} />
        <g stroke="#a5adc9" strokeWidth={5}>
          <path d={curve("520,30 560,40 600,55 590,90 620,110 660,95 700,120 720,160 690,175 640,165 610,190")} />
          <path d={curve("570,110 620,125 680,160 730,190 780,170 830,195 880,185")} />
          <path d={curve("640,80 680,75 725,90 745,60 730,30")} />
          <path d={curve("700,120 750,120 790,105 830,120 850,160 800,190 760,180 765,150")} />
          <path d={curve("560,100 570,60")} />
          <path d={curve("820,130 870,140 900,110")} />
        </g>
        <g stroke="#4a5560" strokeWidth={3} fill={WATER}>
          <path d="M786 22C786 45 790 62 800 78C810 82 820 74 815 60L806 50L812 22Z" />
          <path d="M822 22L812 72L826 78L832 60L842 62L844 82L858 78L846 22Z" />
          <path d="M755 178C765 205 790 215 810 200L805 215C780 220 755 205 755 178Z" />
          <path d="M640 165L652 170L650 185L656 200L642 205L638 190Z" fill="#fff" />
        </g>
        <path d="M798 76H822V98H798Z" fill="#4e6aa6" />
        <path d="M786 100L808 92L815 108L796 114Z" fill="#6b6f78" />
        <path d="M598 125L612 110L625 125Z" fill="#fff" stroke="#b0968a" strokeWidth={2} />
        <path d="M655 220L700 185M662 228L708 190" stroke="#fff" strokeWidth={6} />
      </g>

      {roadOrder.map((kind) => {
        const list = roads.filter((r) => r[1] === kind);
        const st = roadStyle[kind];
        return (
          <g key={kind} fill="none" strokeLinecap="round" strokeLinejoin="round">
            {list.map(([dx, , pts], i) => (
              <path key={`e${i}`} transform={`translate(${dx} 0)`} d={curve(pts)} stroke={st.edge} strokeWidth={st.w + 3} />
            ))}
            {list.map(([dx, , pts], i) => (
              <path key={`f${i}`} transform={`translate(${dx} 0)`} d={curve(pts)} stroke={st.fill} strokeWidth={st.w} />
            ))}
          </g>
        );
      })}

      {/* roundabouts */}
      <g strokeWidth={2}>
        <circle cx={T + 374} cy={898} r={17} fill="#f9b29c" stroke="#c76a55" />
        <circle cx={T + 374} cy={898} r={3} fill="#8a4a3c" stroke="none" />
        <circle cx={S + 602} cy={240} r={13} fill="#fcd6a4" stroke="#b88a52" />
        {[[285, 440], [373, 430], [518, 373], [570, 292], [879, 265]].map(([x, y]) => (
          <g key={x}>
            <circle cx={S + x} cy={y} r={13} fill="#fcd6a4" stroke="#b88a52" />
            <circle cx={S + x} cy={y} r={2} fill="#8a6a3c" stroke="none" />
          </g>
        ))}
      </g>

      <g fill="none" stroke="#4b4bd0" strokeWidth={3.4} strokeDasharray="3.4 6.5">
        {cyclePaths.map(([dx, pts], i) => (
          <path key={i} transform={`translate(${dx} 0)`} d={curve(pts)} />
        ))}
      </g>

      {/* footbridges */}
      <g fill="none" stroke="#55556a" strokeWidth={2}>
        <path transform={`translate(${H} 0)`} d="M862 480L890 462L896 470L868 490ZM870 472L880 486M880 466L888 478" />
        <path transform={`translate(${H} 0)`} d="M845 625L855 625L852 642L844 640Z" />
        <path transform={`translate(${T} 0)`} d="M65 315H90V325H65ZM62 345L75 350L70 362L60 358Z" />
        <path transform={`translate(${T} 0)`} d="M820 434H848V446H820M828 430V450M838 430V450" />
        <path transform={`translate(${T} 0)`} d="M345 895L352 870L383 828M352 900L360 872L388 835" />
        <path transform={`translate(${S} 0)`} d="M258 448L270 418L288 424L274 456ZM255 462H290V470H262Z" stroke="#5757c0" />
      </g>

      {/* power line and municipal border */}
      <g transform={`translate(${T} 0)`} stroke="#8a8a8a" fill="none" strokeWidth={2}>
        <path d="M795 20L812 200L832 620L832 1000M803 20L820 210L832 620" />
        <path d="M232 700L228 820L180 1000" />
        {[[802, 160], [806, 200], [814, 208], [811, 172], [823, 361], [827, 415], [827, 523], [832, 619], [832, 775], [832, 829], [832, 943]].map(([x, y]) => (
          <rect key={y} x={x - 3.5} y={y - 3.5} width={7} height={7} fill="#fff" stroke="#555" />
        ))}
      </g>
      <path
        transform={`translate(${S} 0)`}
        d={curve("1110,180 1080,260 1040,330 985,370 940,450 930,560 905,640 900,700 840,780 800,880 795,990")}
        fill="none"
        stroke="#8d6f8d"
        strokeOpacity={0.6}
        strokeWidth={5}
        strokeDasharray="16 5 4 5"
      />

      <Halo>
        {labels.map(([dx, x, y, text, kind, turn = 0], i) => (
          <text
            key={i}
            x={dx + x}
            y={y}
            textAnchor="middle"
            transform={turn ? `rotate(${turn} ${dx + x} ${y - 8})` : undefined}
            className={labelClass[kind]}
          >
            {text}
          </text>
        ))}
        {curvedLabels.map(([id, , , text]) => (
          <text key={id} className="fill-[#222222] text-[28px]">
            <textPath href={`#${id}`}>{text}</textPath>
          </text>
        ))}
        <text x={H + 793} y={590} textAnchor="middle" className="fill-[#777777] text-[42px]">Hånes</text>
        <text x={W + 31} y={950} className="fill-[#777777] text-[42px]">llen</text>
        <text x={W + 31} y={90} className="fill-[#222222] text-[28px]">eta</text>
        <text x={S + 178} y={650} textAnchor="middle" className="fill-[#6d3a3a] text-[44px] italic">Sørlandsparken</text>
        <text x={S + 805} y={136} textAnchor="middle" className="fill-[#4a4fb5] text-[28px] font-semibold">Reli Safari</text>
        <text x={S + 1055} y={168} className="fill-[#3f7f68] text-[28px] italic">Sørl</text>
        <text x={S + 1068} y={203} className="fill-[#3f7f68] text-[28px] italic">tra</text>
        <text x={S + 1090} y={400} transform={`rotate(12 ${S + 1090} 400)`} className="fill-[#222222] text-[28px]">Tr</text>
        <text x={1518} y={78} transform="rotate(-82 1518 78)" className="fill-[#5b8cc0] text-[28px] italic">Topd</text>
      </Halo>
      <g className="fill-[#0092da] text-[48px] font-medium">
        <text x={S + 964} y={217}>P</text>
        <text x={S + 509} y={532}>P</text>
      </g>
      <ellipse cx={S + 627} cy={441} rx={6} ry={9} fill="#666" />

      <Shield x={W + 470} y={849} w={82} text="452" fill="#f8e5cd" edge="#d2b183" ink="#6b4a1e" />
      <Shield x={T + 555} y={541} w={98} text="E 18" fill="#f3c9d2" edge="#d88ba0" ink="#7a1f3d" />
      <Shield x={T + 419} y={940} w={62} text="41" fill="#fad6cb" edge="#dd9a88" ink="#7a2c1c" />
      <Shield x={S + 162} y={763} w={80} text="498" fill="#f8e5cd" edge="#d2b183" ink="#6b4a1e" />

      {/* location pin */}
      <g transform={`translate(${H + 728} 377) scale(3)`}>
        <path d="M14 40L27 27C31 24 33 21 31 19L24 22Z" fill="#000" fillOpacity={0.14} />
        <path
          d="M12.5 .5C5.9 .5 .6 5.9 .6 12.5C.6 15.400 2 18.600 3.100 20.800L12.500 40.300L21.900 20.800C23 18.600 24.400 15.400 24.400 12.500C24.400 5.900 19.100 .5 12.500 .5Z"
          fill="url(#pin)"
          stroke="url(#pinEdge)"
          strokeWidth="1"
        />
        <path
          d="M12.5 1.600C6.500 1.600 1.700 6.500 1.700 12.500C1.700 15.200 3 18.200 4.100 20.300L12.500 37.700L20.900 20.300C22 18.200 23.300 15.200 23.300 12.500C23.300 6.500 18.500 1.600 12.500 1.600Z"
          fill="none"
          stroke="#fff"
          strokeOpacity=".12"
          strokeWidth="1.100"
        />
        <circle cx="12.5" cy="12.9" r="4.300" fill="#fff" stroke="#1f5f95" strokeOpacity=".6" strokeWidth=".8" />
      </g>
    </svg>
  );
}

/* ------------------------------ chrome ----------------------------- */

function Logo() {
  return (
    <span className="flex w-[54px] flex-col items-center pt-px">
      <svg viewBox="0 0 56 80" className="h-[27px] w-[19px]" aria-hidden="true">
        <path d="M0 0H56V40C44 46 36 42 28 34C18 26 10 26 0 30Z" fill="#1d8540" />
        <path d="M0 44C10 38 20 40 30 48C38 55 48 56 56 50V80H0Z" fill="#1a5aa6" />
      </svg>
      <span className="font-['Noto_Sans',sans-serif] text-[11px] leading-[14px] text-neutral-800">Kartverket</span>
    </span>
  );
}

const navItems = ["Home", "User Registration", "Obstacle Registration", "User", "Privacy", "Contact Us"];

const labelStyle = "mb-1 block font-semibold leading-6 text-gray-700";
const fieldStyle = "block h-[42px] w-full rounded border border-gray-300 px-2 text-black";

function Field({ id, label, hint, value = "" }: { id: string; label: string; hint?: string; value?: string }) {
  return (
    <div>
      <label htmlFor={id} className={labelStyle}>{label}</label>
      <input id={id} name={id} type="text" defaultValue={value} className={fieldStyle} />
      {hint && <p className="text-[13px] leading-5 text-gray-500">{hint}</p>}
    </div>
  );
}

export default function App() {
  const [shape, setShape] = useState("Marker");
  return (
    <div className="flex min-h-screen flex-col bg-gray-50 font-['Segoe_UI','Open_Sans',sans-serif] text-[15px] text-black">
      <div className="h-1 bg-[#2d2d2d]" />
      <header className="bg-white shadow-md">
        <div className="mx-auto flex h-16 max-w-screen-2xl items-center justify-between px-4">
          <a href="#home" className="flex items-center gap-2">
            <Logo />
            <span className="text-[17px] font-bold text-gray-800">WebApplication1</span>
          </a>
          <nav className="flex gap-4">
            {navItems.map((item) => (
              <a key={item} href={"#" + item.toLowerCase().replace(" ", "-")} className="font-semibold text-gray-800">
                {item}
              </a>
            ))}
          </nav>
        </div>
      </header>

      <main className="mx-auto w-full max-w-screen-2xl px-8 pt-6">
        <h1 className="mb-6 text-center text-[28px] font-bold leading-9">Obstacle Registration Form</h1>
        <form onSubmit={(e) => e.preventDefault()}>
          <label htmlFor="shape" className={labelStyle}>Select shape to add:</label>
          <select
            id="shape"
            value={shape}
            onChange={(e) => setShape(e.target.value)}
            className="mb-4 block h-[41px] w-full rounded border border-gray-300 bg-gray-50 px-2"
          >
            <option>Marker</option>
            <option>Line</option>
            <option>Polygon</option>
          </select>

          <div className="relative mb-6 h-80 overflow-hidden rounded border-2 border-gray-300">
            <MapDrawing />
            <div className="absolute left-2.5 top-2.5 flex flex-col rounded border-2 border-black/20 bg-clip-padding font-['DejaVu_Sans_Mono',monospace] text-[22px] font-bold leading-[30px]">
              <button type="button" aria-label="Zoom in" className="h-[31px] w-[30px] rounded-t-xs border-b border-[#cccccc] bg-white">+</button>
              <button type="button" aria-label="Zoom out" className="h-[30px] w-[30px] rounded-b-xs bg-white">−</button>
            </div>
            <div className="absolute bottom-0 right-0 flex items-center gap-1 bg-white/80 px-[5px] font-['Liberation_Sans',Arial,sans-serif] text-xs leading-[17px] text-[#333333]">
              <svg viewBox="0 0 12 8" className="h-2 w-3" aria-hidden="true">
                <path fill="#4C7BE1" d="M0 0h12v4H0z" />
                <path fill="#FFD500" d="M0 4h12v4H0z" />
              </svg>
              <span>
                <a href="#leaflet" className="text-[#0078a8]">Leaflet</a> | © OpenStreetMap contributors
              </span>
            </div>
          </div>

          <div className="mb-4 grid grid-cols-2 gap-4">
            <Field id="name" label="Obstacle Name" hint="Obstacle Name must be between 3 and 100 characters." />
            <Field id="height" label="Obstacle Height (meters)" hint="Obstacle Height must be between 0 and 200 meters." />
          </div>

          <label htmlFor="description" className={labelStyle}>Obstacle Description</label>
          <textarea id="description" className="mb-[22px] block h-[66px] w-full rounded border border-gray-300 p-2" />

          <div className="mb-8 grid grid-cols-2 gap-4">
            <Field id="latitude" label="Latitude" value="58.177209" />
            <Field id="longitude" label="Longitude" value="8.090728" />
          </div>

          <button type="submit" className="h-10 rounded bg-green-500 px-4 text-white">Submit Data</button>
        </form>
      </main>

      <div className="mt-auto flex h-1 bg-[#3a0d12]">
        <div className="ml-[16%] w-12 bg-[#551a1e]" />
      </div>
    </div>
  );
}
